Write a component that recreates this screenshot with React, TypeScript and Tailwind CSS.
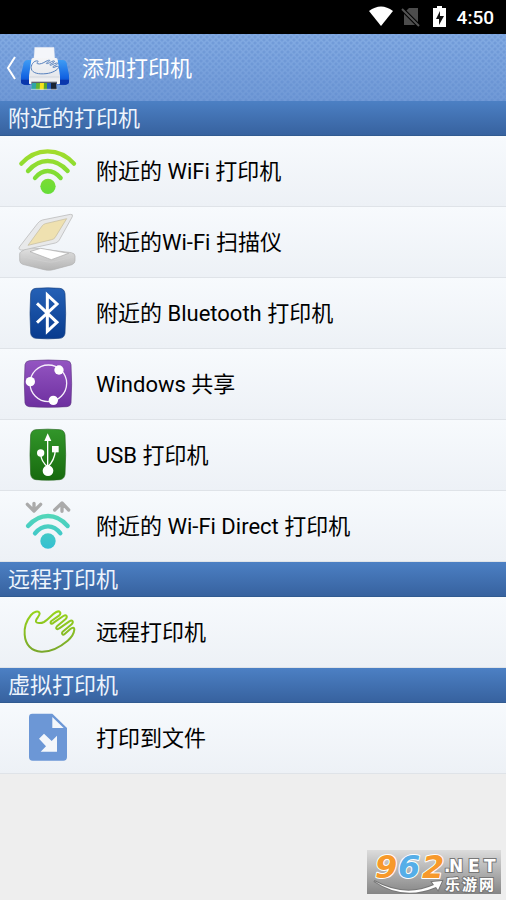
import type { ReactNode } from "react";

function WifiIcon() {
  return (
    <svg viewBox="60 24 168 168" className="size-14 overflow-visible" aria-hidden="true">
      <defs>
        <linearGradient id="wifiGreen" gradientUnits="userSpaceOnUse" x1="0" y1="40" x2="0" y2="176">
          <stop offset="0" stopColor="#a6dc2c" />
          <stop offset="1" stopColor="#66dd38" />
        </linearGradient>
      </defs>
      <g fill="none" stroke="url(#wifiGreen)" strokeWidth="13" strokeLinecap="round">
        <path d="M64 86Q97 49 143 49T222 86" />
        <path d="M84 108Q110 78 143 78T203 108" />
        <path d="M105 129Q122 108 143 108T182 129" />
      </g>
      <circle cx="144" cy="154" r="23" fill="url(#wifiGreen)" />
    </svg>
  );
}

function ScannerIcon() {
  return (
    <svg viewBox="60 234 168 168" className="size-14 overflow-visible" aria-hidden="true">
      <defs>
        <linearGradient id="scanBase" x1="0" y1="0" x2="0" y2="1">
          <stop offset="0" stopColor="#e2e2e2" />
          <stop offset="1" stopColor="#b4b4b4" />
        </linearGradient>
      </defs>
      <path d="M62 348L84 334L214 350Q225 352 225 360V374Q225 382 216 386L160 401Q146 405 132 401L68 385Q60 382 59 374V354Q59 350 62 348Z" fill="url(#scanBase)" stroke="#b0b0b0" strokeWidth="2" />
      <path d="M60 352Q62 360 72 363L138 377Q152 380 164 377L222 362" fill="none" stroke="#d0d0d0" strokeWidth="2" />
      <path d="M90 347L122 337L206 352L154 371Z" fill="#fff" stroke="#a9a9a9" strokeWidth="2" />
      <path d="M58 333L113 262Q118 255 127 252L211 235Q220 234 217 242L178 312Q174 319 166 321L70 342Q54 344 58 333Z" fill="#e8e9ea" stroke="#b2b2b2" strokeWidth="2" />
      <path d="M84 328L127 269Q130 265 136 263L200 248L165 305Q162 309 155 311Z" fill="#efe1b0" stroke="#c2ba9b" strokeWidth="2" />
    </svg>
  );
}

function BluetoothIcon() {
  return (
    <svg viewBox="60 21 168 168" className="size-14 overflow-visible" aria-hidden="true">
      <defs>
        <linearGradient id="btBlue" x1="0" y1="0" x2="0" y2="1">
          <stop offset="0" stopColor="#2561b6" />
          <stop offset="1" stopColor="#083b8e" />
        </linearGradient>
      </defs>
      <path d="M108 31Q143 28 179 31Q193 32 195 47Q199 106 195 166Q193 180 179 181Q143 184 108 181Q94 180 92 166Q88 106 92 47Q94 32 108 31Z" fill="url(#btBlue)" stroke="#173f7e" strokeWidth="2" />
      <path d="M111 76L171 133L142 160V51L171 78L111 134" fill="none" stroke="#fff" strokeWidth="9" />
    </svg>
  );
}

function ShareIcon() {
  return (
    <svg viewBox="60 234 168 168" className="size-14 overflow-visible" aria-hidden="true">
      <defs>
        <linearGradient id="sharePurple" x1="0" y1="0" x2="0" y2="1">
          <stop offset="0" stopColor="#9455c2" />
          <stop offset="1" stopColor="#6d2f9f" />
        </linearGradient>
      </defs>
      <path d="M88 248Q144 244 201 248Q212 249 213 260Q217 317 213 375Q212 385 201 386Q144 390 88 386Q77 385 75 375Q71 317 75 260Q77 249 88 248Z" fill="url(#sharePurple)" stroke="#5f3584" strokeWidth="2" />
      <circle cx="145" cy="316" r="55" fill="none" stroke="#f6effb" strokeWidth="4" />
      <circle cx="177" cy="276" r="14" fill="#fff" />
      <circle cx="91" cy="311" r="14" fill="#fff" />
      <circle cx="160" cy="367" r="14" fill="#fff" />
    </svg>
  );
}

function UsbIcon() {
  return (
    <svg viewBox="60 27 168 168" className="size-14 overflow-visible" aria-hidden="true">
      <defs>
        <linearGradient id="usbGreen" x1="0" y1="0" x2="0" y2="1">
          <stop offset="0" stopColor="#32962a" />
          <stop offset="1" stopColor="#176a0e" />
        </linearGradient>
      </defs>
      <path d="M108 35Q143 32 179 35Q193 36 195 51Q199 110 195 169Q193 184 179 185Q143 188 108 185Q94 184 92 169Q88 110 92 51Q94 36 108 35Z" fill="url(#usbGreen)" stroke="#22651b" strokeWidth="2" />
      <path d="M143 66V150M122 108Q124 132 143 146M166 98Q164 126 144 146" fill="none" stroke="#fff" strokeWidth="4" />
      <path d="M143 46L154 69H133Z" fill="#fff" />
      <circle cx="122" cy="105" r="11" fill="#fff" />
      <rect x="156" y="84" width="20" height="19" fill="#fff" />
      <circle cx="144" cy="158" r="16" fill="#fff" />
    </svg>
  );
}

function WifiDirectIcon() {
  return (
    <svg viewBox="60 240 168 168" className="size-14 overflow-visible" aria-hidden="true">
      <defs>
        <linearGradient id="directTeal" gradientUnits="userSpaceOnUse" x1="0" y1="286" x2="0" y2="392">
          <stop offset="0" stopColor="#55d8b8" />
          <stop offset="1" stopColor="#34bfd2" />
        </linearGradient>
      </defs>
      <g fill="none" stroke="#aaa" strokeWidth="10" strokeLinecap="round" strokeLinejoin="round">
        <path d="M102 256V278M82 259L102 279L122 259" />
        <path d="M186 280V258M164 276L186 255L206 276" />
      </g>
      <g fill="none" stroke="url(#directTeal)" strokeWidth="13" strokeLinecap="round">
        <path d="M84 324Q111 294 144 294T203 324" />
        <path d="M105 346Q122 325 144 325T181 346" />
      </g>
      <circle cx="144" cy="369" r="23" fill="url(#directTeal)" />
    </svg>
  );
}

function HandIcon() {
  return (
    <svg viewBox="60 132 168 168" className="size-14 overflow-visible" aria-hidden="true">
      <defs>
        <linearGradient id="handGreen" gradientUnits="userSpaceOnUse" x1="0" y1="150" x2="0" y2="278">
          <stop offset="0" stopColor="#98d51a" />
          <stop offset="1" stopColor="#79a72c" />
        </linearGradient>
      </defs>
      <path
        d="M119 160C115 150 101 156 93 165C79 182 72 202 74 224C76 254 94 274 124 275C154 276 184 258 203 242C214 233 222 219 223 209C223 201 217 202 211 207L194 222C188 227 183 221 188 215L215 193C222 185 217 178 208 184L178 205C171 211 165 205 171 199L197 177C204 169 199 163 190 168L161 188C154 194 148 189 154 183L178 166C185 158 179 151 169 156C155 163 145 179 132 186C122 191 111 190 108 185C105 179 120 168 119 160Z"
        fill="none" stroke="url(#handGreen)" strokeWidth="6" strokeLinejoin="round"
      />
    </svg>
  );
}

function FileIcon() {
  return (
    <svg viewBox="60 45 168 168" className="size-14 overflow-visible" aria-hidden="true">
      <path d="M97 56H157L201 99V186Q201 197 190 197H98Q87 197 87 186V66Q87 56 97 56Z" fill="#6c97d6" />
      <path d="M157 66V99H191Z" fill="#f4f7fb" />
      <path d="M117 131L132 116L155 138L171 122V170H122L138 154Z" fill="#f4f7fb" />
    </svg>
  );
}

function PrinterLogo() {
  return (
    <svg viewBox="60 36 150 144" className="h-12 w-[50px]" aria-hidden="true">
      <defs>
        <linearGradient id="printerSide" x1="0" y1="0" x2="0" y2="1">
          <stop offset="0" stopColor="#3f9cf4" />
          <stop offset="0.7" stopColor="#1263e2" />
          <stop offset="1" stopColor="#0a41c0" />
        </linearGradient>
        <linearGradient id="printerBody" x1="0" y1="0" x2="0" y2="1">
          <stop offset="0" stopColor="#f4f5f7" />
          <stop offset="0.7" stopColor="#e6e8ec" />
          <stop offset="1" stopColor="#fafafa" />
        </linearGradient>
      </defs>
      <path d="M84 84H188Q197 84 200 94L207 128V148Q207 158 197 158H74Q63 158 63 148V128L71 94Q74 84 84 84Z" fill="url(#printerSide)" />
      <path d="M63 143H90V158H74Q63 158 63 148ZM180 143H207V148Q207 158 197 158H180Z" fill="#0a37ac" />
      <path d="M104 46H162L165 86H101Z" fill="#f4f6fa" stroke="#d5dceb" />
      <path d="M99 78H168Q172 78 173 83L180 132V154Q180 157 176 157H91Q87 157 87 154V132L94 83Q95 78 99 78Z" fill="url(#printerBody)" />
      <path d="M88 135H179" stroke="#c9ced8" strokeWidth="2" />
      <path d="M94 149H171V156H94Z" fill="#5b6270" />
      <path d="M96 153H109V173H94Z" fill="#2fa6a5" />
      <path d="M109 153H120V173H107Z" fill="#63b62e" />
      <path d="M120 153H132V173H119Z" fill="#f4e31c" />
      <path d="M132 153H141V173H131Z" fill="#57a72c" />
      <path d="M141 153H153V173H141Z" fill="#245ebd" />
      <path d="M153 153H168L170 173H153Z" fill="#1b2433" />
      <path d="M93 172H172" stroke="#e7edf7" strokeWidth="2" />
      <path
        d="M113 87C101 84 91 101 94 111C98 124 116 127 138 125C158 123 174 113 176 106C176 102 172 102 162 106C156 107 157 103 170 98C178 93 172 90 157 98C148 102 145 98 160 92C168 86 162 84 149 92C139 98 134 94 146 89C154 84 146 83 138 88C130 93 120 98 112 95C107 92 119 88 113 87Z"
        fill="none" stroke="#5580bd" strokeWidth="3"
      />
    </svg>
  );
}

function StatusBar() {
  return (
    <div className="flex h-[34px] items-center justify-end bg-black pr-3 text-white">
      <svg viewBox="0 0 90 34" className="h-[34px] w-[90px]" aria-hidden="true">
        <path d="M2 11Q14 2 26 11L14 26Z" fill="#fff" />
        <path d="M42 8H51V25H37V13Z" fill="#4c4c4c" />
        <path d="M35 9L52 26" stroke="#000" strokeWidth="4" />
        <path d="M35 9L52 26" stroke="#555" strokeWidth="2" />
        <path d="M70 6H75V8H79V27H66V8H70Z" fill="#fff" />
        <path d="M73 11L69 19H72V25L77 16H73Z" fill="#111" />
      </svg>
      <span className="pt-0.5 text-[19px] leading-6 font-medium">4:50</span>
    </div>
  );
}

function Section({ title, children }: { title: string; children: ReactNode }) {
  return (
    <section>
      <h2 className="flex h-[35px] items-center border-b border-[#315b91] bg-linear-to-b from-[#4c80c4] to-[#37629f] px-2 pt-0.5 text-[22px] leading-8 text-[#edf4fc]">
        {title}
      </h2>
      <ul>{children}</ul>
    </section>
  );
}

function Row({ icon, label }: { icon: ReactNode; label: string }) {
  return (
    <li>
      <button
        type="button"
        className="flex h-[71px] w-full items-center gap-5 border-b border-[#dfe3e8] bg-linear-to-b from-[#f7fafd] to-[#edf1f6] px-5 text-left text-[22px] leading-8 text-black"
      >
        {icon}
        <span className="pt-0.5">{label}</span>
      </button>
    </li>
  );
}

function Watermark() {
  return (
    <svg
      viewBox="0 0 134 44"
      className="absolute right-[5px] bottom-[6px] h-11 w-[134px] overflow-visible font-['DejaVu_Sans','Noto_Sans_CJK_SC',sans-serif] font-bold"
      role="img"
      aria-label="962.NET 乐游网"
    >
      <defs>
        <linearGradient id="markGray" x1="0" y1="0" x2="0" y2="1">
          <stop offset="0" stopColor="#dcdcdc" />
          <stop offset="1" stopColor="#858585" />
        </linearGradient>
      </defs>
      <rect width="134" height="44" fill="url(#markGray)" />
      <g fontSize="32" fontStyle="italic" stroke="#fff" strokeWidth="2" strokeLinejoin="round" paintOrder="stroke">
        <text x="8" y="28" fill="#f7992b">9</text>
        <text x="31" y="28" fill="#55aee8">6</text>
        <text x="55" y="28" fill="#f7992b">2</text>
      </g>
      <g fill="#fff" stroke="#777" strokeWidth="2" paintOrder="stroke">
        <path d="M7 31Q38 48 67 35L65 32L75 31L71 40L69 37Q36 51 7 31Z" />
        <text x="77" y="22" fontSize="17">.</text>
        <text x="82" y="22" fontSize="17">N</text>
        <text x="101" y="22" fontSize="17">E</text>
        <text x="117" y="22" fontSize="17">T</text>
        <g className="font-['Noto_Sans_CJK_SC',sans-serif]" fontSize="15">
          <text x="78" y="40">乐</text>
          <text x="95" y="40">游</text>
          <text x="112" y="40">网</text>
        </g>
      </g>
    </svg>
  );
}

export default function App() {
  return (
    <div className="relative min-h-screen bg-[#eeeeee] font-[Roboto,'Noto_Sans_CJK_SC',sans-serif]" lang="zh-CN">
      <StatusBar />
      <header className="flex h-[67px] items-center bg-[#7ba3dd] bg-[radial-gradient(circle,#5c88cb66_1px,transparent_2px),radial-gradient(circle,#5c88cb66_1px,transparent_2px),linear-gradient(#83abe3,#7099d6)] bg-[size:6px_6px,6px_6px,100%_100%] bg-[position:0_0,3px_3px,0_0] pl-[6px]">
        <button type="button" aria-label="返回" className="flex items-center">
          <svg viewBox="0 0 10 26" className="h-[26px] w-[14px]" preserveAspectRatio="xMinYMid meet" fill="none" stroke="#fff" strokeWidth="2" aria-hidden="true">
            <path d="M9 2L2 13L9 24" />
          </svg>
          <PrinterLogo />
        </button>
        <h1 className="pt-0.5 pl-3 text-[22px] leading-8 text-white">添加打印机</h1>
      </header>
      <main>
        <Section title="附近的打印机">
          <Row icon={<WifiIcon />} label="附近的 WiFi 打印机" />
          <Row icon={<ScannerIcon />} label="附近的Wi-Fi 扫描仪" />
          <Row icon={<BluetoothIcon />} label="附近的 Bluetooth 打印机" />
          <Row icon={<ShareIcon />} label="Windows 共享" />
          <Row icon={<UsbIcon />} label="USB 打印机" />
          <Row icon={<WifiDirectIcon />} label="附近的 Wi-Fi Direct 打印机" />
        </Section>
        <Section title="远程打印机">
          <Row icon={<HandIcon />} label="远程打印机" />
        </Section>
        <Section title="虚拟打印机">
          <Row icon={<FileIcon />} label="打印到文件" />
        </Section>
      </main>
      <Watermark />
    </div>
  );
}
